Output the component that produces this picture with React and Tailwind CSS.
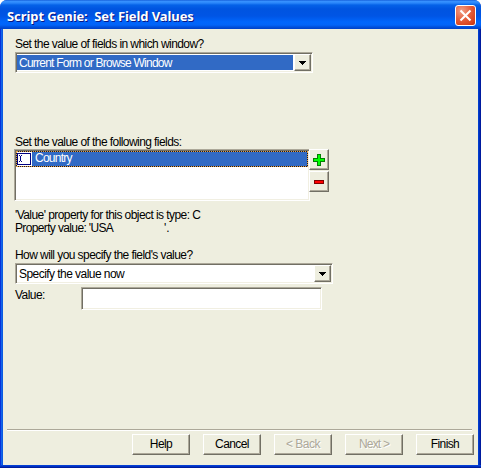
import React from 'react';

const raised =
  'border border-t-white border-l-white border-r-[#716f64] border-b-[#716f64] bg-[#eeeedf] shadow-[inset_-1px_-1px_0_#aca899]';
const sunken =
  'border border-t-[#aca899] border-l-[#aca899] border-r-white border-b-white bg-white shadow-[inset_1px_1px_0_#716f64,inset_-1px_-1px_0_#f1efe2]';

function Label({ className = '', children }) {
  return (
    <div className={`h-[14px] text-[12px] leading-[14px] whitespace-pre ${className}`}>{children}</div>
  );
}

function DropButton() {
  return (
    <div className={`flex h-[17px] w-[17px] shrink-0 items-center justify-center ${raised}`}>
      <svg width="7" height="4" viewBox="0 0 7 4" shapeRendering="crispEdges">
        <path d="M0 0h7v1h-1v1h-1v1h-1v1h-1v-1h-1v-1h-1v-1h-1z" fill="#000" />
      </svg>
    </div>
  );
}

function WizardButton({ label, disabled, tracking }) {
  return (
    <button
      className={`flex h-[21px] w-[58px] items-center justify-center pb-px text-[12px] leading-[14px] ${tracking} ${raised} ${
        disabled ? 'text-[#aca899] [text-shadow:1px_1px_0_#fff]' : 'text-black'
      }`}
    >
      {label}
    </button>
  );
}

export default function App() {
  return (
    <div className="h-[468px] w-[481px] overflow-hidden bg-white font-['Liberation_Sans',Arial,sans-serif] text-black">
      <div className="flex h-full flex-col overflow-hidden rounded-t-[7px] bg-[linear-gradient(to_right,#0831d9_0,#0831d9_1px,#166aee_1px,#0855dd_3px,#0855dd_478px,#0045d8_478px,#0024b0_480px,#00138c_481px)]">
        <div className="flex h-[29px] shrink-0 items-center justify-between bg-[linear-gradient(to_bottom,#0a50d0_0,#3a93ff_1px,#2a86fa_3px,#0562e8_5px,#0054e0_9px,#0055e5_16px,#0066fc_22px,#0264f8_25px,#0050dc_27px,#0041c6_29px)] pr-[5px] pl-[7px]">
          <div className="mt-[3px] whitespace-pre font-['Noto_Sans',sans-serif] text-[13px] leading-[18px] font-bold tracking-[-0.08px] text-white [text-shadow:1px_1px_0_#0a1883]">
            Script Genie:  Set Field Values
          </div>
          <div className="mt-[2px] flex h-[21px] w-[21px] items-center justify-center rounded-[3px] border border-white bg-[radial-gradient(circle_at_30%_25%,#f0a088_0,#e5603e_45%,#d8421c_80%,#b83010_100%)]">
            <svg width="13" height="13" viewBox="0 0 13 13">
              <path d="M1.5 1.5l10 10M11.5 1.5l-10 10" stroke="#fff" strokeWidth="2.1" />
            </svg>
          </div>
        </div>

        <div className="mx-[3px] flex h-[436px] shrink-0 flex-col bg-[#eeeedf]">
          <Label className="mt-[8px] ml-[12px] tracking-[-0.57px]">Set the value of fields in which window?</Label>
          <div className={`mt-px ml-[12px] flex h-[21px] w-[298px] justify-between p-px pr-0 ${sunken}`}>
            <div className="mt-px h-[15px] w-[276px] bg-[#316ac5] pl-[2px] text-[12px] leading-[16px] tracking-[-0.76px] whitespace-pre text-white">
              Current Form or Browse Window
            </div>
            <div className="mr-px">
              <DropButton />
            </div>
          </div>

          <Label className="mt-[62px] ml-[12px] tracking-[-0.57px]">Set the value of the following fields:</Label>
          <div className="ml-[11px] flex h-[52px]">
            <div className={`h-[52px] w-[296px] p-px ${sunken}`}>
              <div className="h-[16px] w-[292px] border border-dotted border-[#e8a040] bg-[#101830]">
                <div className="flex h-[14px] items-start bg-[#316ac5]">
                  <div className="flex h-[14px] w-[15px] items-start bg-white pt-px">
                    <svg width="15" height="12" viewBox="0 0 15 12" shapeRendering="crispEdges">
                      <rect x=".5" y=".5" width="13" height="11" fill="#fff" stroke="#000080" />
                      <path d="M2 2h1v1h1v-1h1v1h-1v5h1v1h-1v-1h-1v1h-1v-1h1v-5h-1z" fill="#000080" />
                    </svg>
                  </div>
                  <Label className="-mt-px pl-[3px] tracking-[-0.75px] text-white">Country</Label>
                </div>
              </div>
            </div>
            <div className="-ml-px flex flex-col gap-px">
              <div className={`flex h-[21px] w-[20px] items-center justify-center ${raised}`}>
                <svg width="12" height="12" viewBox="0 0 12 12" shapeRendering="crispEdges">
                  <path d="M4.5 .5h3v4h4v3h-4v4h-3v-4h-4v-3h4z" fill="#00ff00" stroke="#008000" />
                </svg>
              </div>
              <div className={`flex h-[21px] w-[20px] items-center justify-center ${raised}`}>
                <svg width="10" height="4" viewBox="0 0 10 4" shapeRendering="crispEdges">
                  <rect x=".5" y=".5" width="9" height="3" fill="#ff0000" stroke="#800000" />
                </svg>
              </div>
            </div>
          </div>

          <Label className="mt-[7px] ml-[12px] tracking-[-0.57px]">'Value' property for this object is type: C</Label>
          <div className="-mt-px ml-[12px] flex">
            <Label className="w-[149px] tracking-[-0.64px]">Property value: 'USA</Label>
            <Label>'.</Label>
          </div>

          <Label className="mt-[13px] ml-[12px] tracking-[-0.57px]">How will you specify the field's value?</Label>
          <div className={`mt-[1px] ml-[12px] flex h-[21px] w-[318px] justify-between p-px ${sunken}`}>
            <Label className="mt-[2px] ml-[2px] tracking-[-0.55px]">Specify the value now</Label>
            <DropButton />
          </div>
          <div className="mt-[3px] ml-[12px] flex">
            <Label className="mt-px w-[66px] tracking-[-0.55px]">Value:</Label>
            <input className={`h-[23px] w-[241px] px-1 text-[12px] outline-none ${sunken}`} />
          </div>

          <div className="mt-auto mr-[6px] mb-[3px] ml-[4px] h-[2px] border-t border-b border-t-[#aca899] border-b-white" />
          <div className="mb-[10px] ml-[129px] flex gap-[13px]">
            <WizardButton label="Help" tracking="tracking-[-0.6px]" />
            <WizardButton label="Cancel" tracking="tracking-[-0.6px]" />
            <WizardButton label="< Back" tracking="tracking-[-0.5px]" disabled />
            <WizardButton label="Next >" tracking="tracking-[-0.8px]" disabled />
            <WizardButton label="Finish" tracking="tracking-[-0.6px]" />
          </div>
        </div>
        <div className="h-[3px] shrink-0 bg-[linear-gradient(to_bottom,#0848e0,#0030c0,#00138c)]" />
      </div>
    </div>
  );
}
